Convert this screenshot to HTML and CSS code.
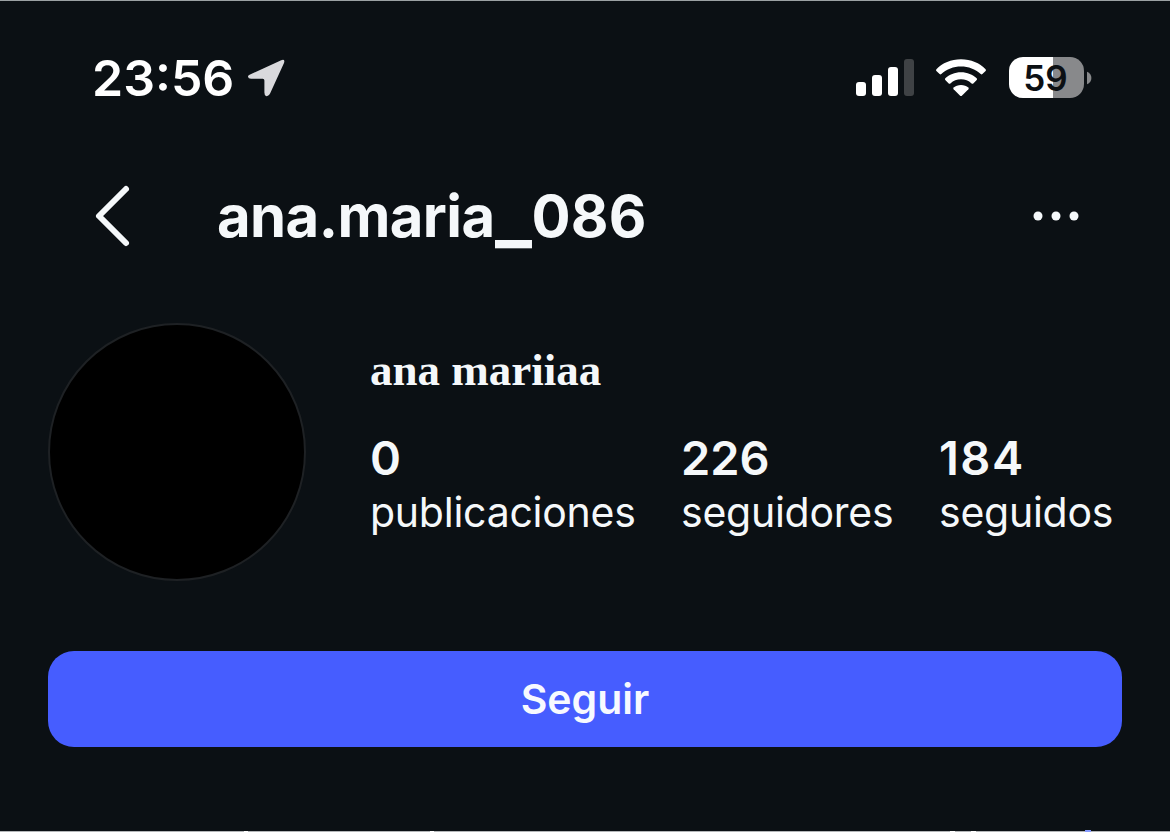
FILE: index.html
```html
<!DOCTYPE html>
<html lang="es">
<head>
<meta charset="utf-8">
<title>ana.maria_086</title>
<link rel="stylesheet" href="styles.css">
</head>
<body>
<main class="screen">
  <header class="status">
    <span class="time">23:56</span>
    <svg class="location" width="40" height="40" viewBox="0 0 40 40"><path d="M3.6 16.2 34.2 2.2Q38.4 .8 37 5L23.2 35.2Q21.6 38.800 19 38Q17.4 37.400 17.4 34.6V22.4Q17.4 20.8 15.8 20.8H4Q1.2 20.8 1 18.8Q.8 17.2 3.6 16.2Z"/></svg>
    <svg class="signal" width="58" height="38" viewBox="0 0 58 38"><rect x="0" y="23" width="10" height="14" rx="3"/><rect x="16" y="16" width="10" height="21" rx="3"/><rect x="32" y="8" width="10" height="29" rx="3"/><rect class="faint" x="48" y="0" width="10" height="37" rx="3"/></svg>
    <svg class="wifi" width="52" height="38" viewBox="0 0 52 38"><path d="M26 .3C36 .3 44.600 4.100 50.600 10.200Q51.400 11.100 50.600 12L47.400 15Q46.600 15.800 45.700 15C40.200 10 33.500 7.400 26 7.400S11.800 10 6.300 15Q5.400 15.800 4.600 15L1.400 12Q.6 11.100 1.400 10.200C7.400 4.100 16 .3 26 .3Z"/><path d="M26 13.200C32.300 13.200 37.700 15.600 41.700 19.300Q42.500 20.200 41.700 21L38.300 24.400Q37.500 25.100 36.600 24.400C33.600 21.700 30.100 20.300 26 20.300S18.400 21.700 15.400 24.400Q14.500 25.100 13.700 24.400L10.300 21Q9.500 20.200 10.300 19.300C14.300 15.600 19.700 13.200 26 13.200Z"/><path d="M26 26C29 26 31.500 27 33.300 28.500Q34.200 29.400 33.400 30.300L27.100 36.600Q26 37.600 24.900 36.600L18.600 30.300Q17.800 29.400 18.700 28.500C20.500 27 23 26 26 26Z"/></svg>
    <span class="battery">59</span>
    <svg class="battery-tip" width="5" height="14" viewBox="0 0 5 14"><path d="M0 .8Q4.400 2.500 4.400 7T0 13.200Z"/></svg>
  </header>
  <nav class="nav">
    <svg class="back" width="38" height="64" viewBox="0 0 38 64"><path d="M32 5 5 32 32 59"/></svg>
    <h1 class="username">ana.maria<span class="underscore">_</span><span class="digits">086</span></h1>
    <svg class="more" width="48" height="12" viewBox="0 0 48 12"><circle cx="6" cy="6" r="4.500"/><circle cx="24" cy="6" r="4.500"/><circle cx="42" cy="6" r="4.500"/></svg>
  </nav>
  <section class="profile">
    <div class="avatar"></div>
    <div class="details">
      <div class="name">ana mariiaa</div>
      <div class="stats">
        <div class="stat posts"><strong class="count">0</strong><span class="label">publicaciones</span></div>
        <div class="stat followers"><strong class="count">226</strong><span class="label">seguidores</span></div>
        <div class="stat following"><strong class="count">184</strong><span class="label">seguidos</span></div>
      </div>
    </div>
  </section>
  <button class="follow">Seguir</button>
  <svg class="peek" width="1170" height="2" viewBox="0 0 1170 2"><path class="peek-light" d="M244 1h4v1h-4zM430 1h4v1h-4zM950 1h5v1h-5zM971 1h5v1h-5z"/><path class="peek-blue" d="M1085 0h6v2h-6z"/></svg>
</main>
</body>
</html>
```
FILE: styles.css
```css
* { box-sizing: border-box; }
body { margin: 0; background: #0b1014; font-family: Inter, sans-serif; color: #f5f8fa; }
svg { display: block; flex: none; }
.screen { position: relative; display: flex; flex-direction: column; width: 1170px; height: 832px; border-top: 1px solid #9ba1a3; border-bottom: 1px solid #b3b6b8; }
.status { display: flex; align-items: center; height: 154px; padding: 0 78px 0 92px; color: #fff; }
.time { width: 155px; font-size: 50px; font-weight: 600; line-height: 60px; white-space: nowrap; }
.location { fill: #d9d9dc; }
.signal { margin-left: auto; fill: #fff; }
.faint { fill: #3f4245; }
.wifi { margin-left: 21px; fill: #fff; }
.battery { width: 75px; height: 41px; margin: 0 0 2px 22px; padding-right: 2px; border-radius: 14px; background: linear-gradient(to right, #fff 44px, #88898b 44px); color: #0c1014; font-size: 35px; font-weight: 600; line-height: 42px; text-align: center; }
.battery-tip { margin: 0 0 1px 3px; fill: #88898b; }
.nav { display: flex; align-items: center; height: 122px; padding: 0 90px 0 94px; }
.back { fill: none; stroke: #f5f8fa; stroke-width: 6; stroke-linecap: round; stroke-linejoin: round; }
.username { margin: 0 0 0 85px; font-size: 58px; font-weight: 700; line-height: 70px; letter-spacing: -0.6px; white-space: nowrap; }
.underscore { display: inline-block; width: 37px; letter-spacing: 0; transform: translate(1px, 4px) scale(1.34, 1.25); transform-origin: 0 62px; }
.digits { letter-spacing: 0.2px; }
.more { margin-left: auto; fill: #f5f8fa; }
.profile { display: flex; padding: 46px 0 0 48px; }
.avatar { flex: none; width: 258px; height: 258px; border: 2px solid #1e2124; border-radius: 50%; background: #000; }
.details { margin-left: 64px; padding-top: 25px; }
.name { font-family: "Liberation Serif", serif; font-size: 45px; font-weight: 700; line-height: 44px; }
.stats { display: flex; margin-top: 42px; }
.stat { display: flex; flex-direction: column; white-space: nowrap; }
.posts { width: 311px; }
.followers { width: 258px; }
.count { font-size: 47px; font-weight: 600; line-height: 48px; }
.following .count { letter-spacing: 1.5px; }
.label { margin-top: 3px; font-size: 41px; line-height: 54px; letter-spacing: -0.25px; }
.follow { height: 96px; margin: 70px 48px 0; padding: 0; border: 0; border-radius: 26px; background: #465dff; color: #f7f9ff; font: 600 41px/96px Inter, sans-serif; }
.peek { position: absolute; left: 0; bottom: -1px; }
.peek-light { fill: #fff; }
.peek-blue { fill: #879cff; }
```
